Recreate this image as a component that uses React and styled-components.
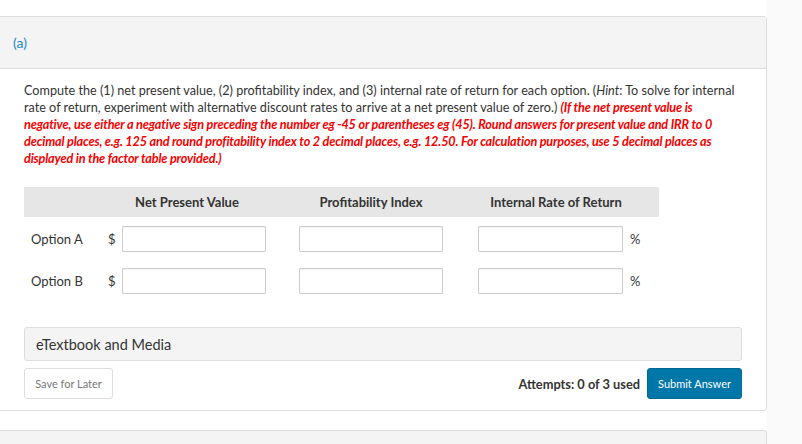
import React from "react";
import styled, { createGlobalStyle } from "styled-components";

const GlobalStyle = createGlobalStyle`
  html, body {
    margin: 0;
    padding: 0;
    background: #ffffff;
    font-family: Lato, "Open Sans", Arial, sans-serif;
    color: #333333;
  }
`;

const options = ["Option A", "Option B"];

function App() {
  return (
    <>
      <GlobalStyle />
      <Page>
        <Main>
          <Card>
            <CardHeader>
              <PartLabel>(a)</PartLabel>
            </CardHeader>
            <CardBody>
              <Question>
                Compute the (1) net present value, (2) profitability index, and (3) internal rate of
                return for each option. (<em>Hint</em>: To solve for internal rate of return, experiment
                with alternative discount rates to arrive at a net present value of zero.){" "}
                <Warning>
                  (If the net present value is negative, use either a negative sign preceding the
                  number eg -45 or parentheses eg (45). Round answers for present value and IRR to 0
                  decimal places, e.g. 125 and round profitability index to 2 decimal places, e.g.
                  12.50. For calculation purposes, use 5 decimal places as displayed in the factor
                  table provided.)
                </Warning>
              </Question>

              <Table>
                <HeadRow>
                  <span />
                  <HeadCell $width="158px">Net Present Value</HeadCell>
                  <HeadCell $indent="33px" $width="144px">Profitability Index</HeadCell>
                  <HeadCell $indent="32px" $width="162px">Internal Rate of Return</HeadCell>
                </HeadRow>
                {options.map((name) => (
                  <Row key={name}>
                    <RowLabel>{name}</RowLabel>
                    <Field>
                      <Unit $side="left">$</Unit>
                      <Input type="text" />
                    </Field>
                    <Field $indent="33px">
                      <Input type="text" />
                    </Field>
                    <Field $indent="35px">
                      <Input type="text" $width="145px" />
                      <Unit $side="right">%</Unit>
                    </Field>
                  </Row>
                ))}
              </Table>

              <Media>eTextbook and Media</Media>

              <Footer>
                <SaveButton>Save for Later</SaveButton>
                <Actions>
                  <Attempts>Attempts: 0 of 3 used</Attempts>
                  <SubmitButton>Submit Answer</SubmitButton>
                </Actions>
              </Footer>
            </CardBody>
          </Card>
          <NextCard />
        </Main>
        <Gutter />
      </Page>
    </>
  );
}

export default App;

const Page = styled.div`
  display: flex;
  height: 444px;
  overflow: hidden;
`;

const Main = styled.div`
  width: 767px;
  flex-shrink: 0;
  padding-top: 16px;
`;

const Gutter = styled.div`
  flex: 1;
  background: #fafafa;
`;

const Card = styled.div`
  margin-left: -3px;
  border: 1px solid #dddddd;
  border-radius: 3px;
  background: #ffffff;
  overflow: hidden;
`;

const CardHeader = styled.div`
  height: 51px;
  display: flex;
  align-items: center;
  padding-left: 15px;
  background: #f4f4f4;
  border-bottom: 1px solid #dddddd;
`;

const PartLabel = styled.span`
  color: #1d87c6;
  font-size: 14px;
`;

const CardBody = styled.div`
  padding: 13px 24px 11px 26px;
`;

const Question = styled.p`
  margin: 0;
  width: 718px;
  font-size: 12.65px;
  line-height: 17px;
  color: #333333;

  em {
    font-style: italic;
  }
`;

const Warning = styled.strong`
  color: #f40000;
  font-style: italic;
  font-weight: 700;
  letter-spacing: -0.15px;
`;

const Table = styled.div`
  width: 635px;
  margin-top: 20px;
`;

const grid = `
  display: grid;
  grid-template-columns: 84px 158px 177px 1fr;
`;

const HeadRow = styled.div`
  ${grid}
  height: 30px;
  align-items: center;
  background: #e6e6e6;
`;

const HeadCell = styled.div`
  box-sizing: content-box;
  width: ${(p) => p.$width};
  padding-left: ${(p) => p.$indent || "0"};
  text-align: center;
  font-size: 13px;
  font-weight: 700;
  color: #333333;
  white-space: nowrap;
`;

const Row = styled.div`
  ${grid}
  align-items: center;
  margin-top: 9px;

  & + & {
    margin-top: 16px;
  }
`;

const RowLabel = styled.div`
  padding-left: 7px;
  font-size: 13px;
  color: #333333;
`;

const Field = styled.div`
  display: flex;
  align-items: center;
  padding-left: ${(p) => p.$indent || "0"};
`;

const Unit = styled.span`
  font-size: 13px;
  color: #333333;
  margin-right: ${(p) => (p.$side === "left" ? "6px" : "0")};
  margin-left: ${(p) => (p.$side === "right" ? "7px" : "0")};
  width: ${(p) => (p.$side === "left" ? "8px" : "auto")};
`;

const Input = styled.input`
  box-sizing: border-box;
  width: ${(p) => p.$width || "144px"};
  height: 26px;
  margin: 0;
  padding: 0 6px;
  border: 1px solid #cccccc;
  border-radius: 1px;
  box-shadow: inset 0 1px 1px rgba(0, 0, 0, 0.05);
  background: #ffffff;
  font-family: inherit;
  font-size: 13px;
`;

const Media = styled.div`
  box-sizing: border-box;
  width: 718px;
  height: 34px;
  margin-top: 33px;
  display: flex;
  align-items: center;
  padding-left: 11px;
  background: #f4f4f4;
  border: 1px solid #dddddd;
  border-radius: 3px;
  font-size: 14.5px;
  color: #333333;
`;

const Footer = styled.div`
  width: 718px;
  margin-top: 7px;
  display: flex;
  justify-content: space-between;
  align-items: center;
`;

const SaveButton = styled.button`
  box-sizing: border-box;
  width: 89px;
  height: 31px;
  padding: 0;
  background: #ffffff;
  border: 1px solid #dddddd;
  border-radius: 3px;
  font-family: inherit;
  font-size: 11px;
  color: #777777;
`;

const Actions = styled.div`
  display: flex;
  align-items: center;
  gap: 7px;
`;

const Attempts = styled.span`
  font-size: 12.8px;
  font-weight: 700;
  color: #333333;
`;

const SubmitButton = styled.button`
  box-sizing: border-box;
  width: 95px;
  height: 31px;
  padding: 0;
  background: #0176a8;
  border: 1px solid #016892;
  border-radius: 3px;
  font-family: inherit;
  font-size: 11px;
  color: #ffffff;
`;

const NextCard = styled.div`
  height: 40px;
  margin-top: 19px;
  margin-left: -3px;
  background: #f4f4f4;
  border: 1px solid #dddddd;
  border-bottom: none;
  border-radius: 3px 3px 0 0;
`;
